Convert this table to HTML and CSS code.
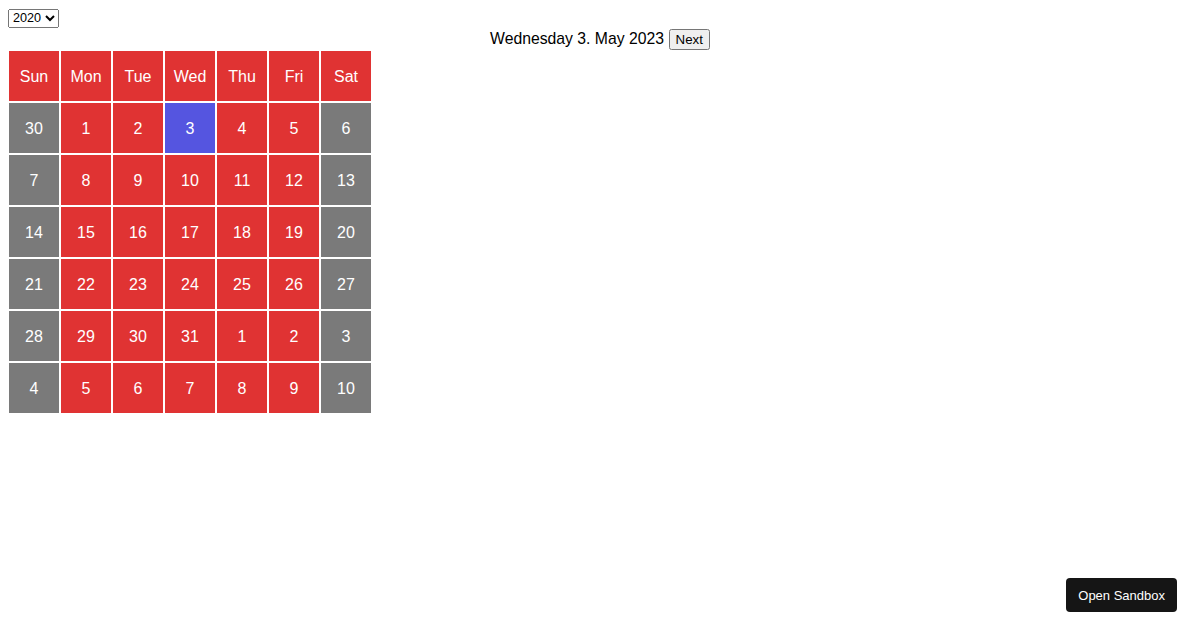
FILE: index.html
```html
<!DOCTYPE html>
<html>
<head>
<meta charset="utf-8">
<link rel="stylesheet" href="styles.css">
</head>
<body>
<select class="year">
  <option>2020</option>
  <option>2021</option>
  <option>2022</option>
  <option>2023</option>
</select>
<div class="header"><span class="date">Wednesday 3. May 2023</span> <button class="next">Next</button></div>
<div class="cal">
  <div class="cell">Sun</div><div class="cell">Mon</div><div class="cell">Tue</div><div class="cell">Wed</div><div class="cell">Thu</div><div class="cell">Fri</div><div class="cell">Sat</div>
  <div class="cell we">30</div><div class="cell">1</div><div class="cell">2</div><div class="cell sel">3</div><div class="cell">4</div><div class="cell">5</div><div class="cell we">6</div>
  <div class="cell we">7</div><div class="cell">8</div><div class="cell">9</div><div class="cell">10</div><div class="cell">11</div><div class="cell">12</div><div class="cell we">13</div>
  <div class="cell we">14</div><div class="cell">15</div><div class="cell">16</div><div class="cell">17</div><div class="cell">18</div><div class="cell">19</div><div class="cell we">20</div>
  <div class="cell we">21</div><div class="cell">22</div><div class="cell">23</div><div class="cell">24</div><div class="cell">25</div><div class="cell">26</div><div class="cell we">27</div>
  <div class="cell we">28</div><div class="cell">29</div><div class="cell">30</div><div class="cell">31</div><div class="cell">1</div><div class="cell">2</div><div class="cell we">3</div>
  <div class="cell we">4</div><div class="cell">5</div><div class="cell">6</div><div class="cell">7</div><div class="cell">8</div><div class="cell">9</div><div class="cell we">10</div>
</div>
<button class="sandbox">Open Sandbox</button>
</body>
</html>
```
FILE: styles.css
```css
body {
  margin: 8px;
  font-family: "Liberation Sans", Arial, sans-serif;
  font-size: 16px;
  color: #000;
  background: #fff;
}
.year {
  font-family: "Liberation Sans", Arial, sans-serif;
  font-size: 12.6px;
  height: 19px;
}
.header {
  text-align: center;
  margin-top: 1px;
}
.date {
  font-size: 15.75px;
}
.next {
  font-family: "Liberation Sans", Arial, sans-serif;
  font-size: 13.33px;
  padding: 1px 5px;
}
.cal {
  display: flex;
  flex-wrap: wrap;
  width: 364px;
  margin-top: 0;
}
.cell {
  box-sizing: border-box;
  width: 50px;
  height: 50px;
  margin: 1px;
  padding-top: 2px;
  background: #e03333;
  color: #fff;
  display: flex;
  align-items: center;
  justify-content: center;
}
.cell.we {
  background: #7a7a7a;
}
.cell.sel {
  background: #5555e0;
}
.sandbox {
  position: fixed;
  right: 23px;
  bottom: 18px;
  background: #151515;
  color: #fff;
  border: none;
  border-radius: 4px;
  padding: 0 12px;
  height: 34px;
  white-space: nowrap;
  font-family: "Liberation Sans", Arial, sans-serif;
  font-size: 13px;
}
```
